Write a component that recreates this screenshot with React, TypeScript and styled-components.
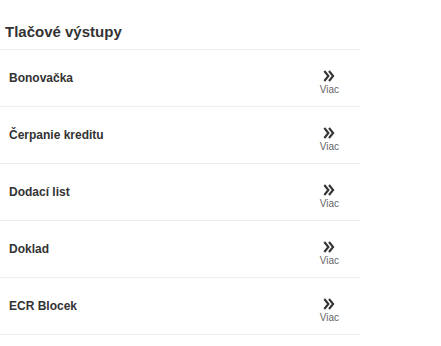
import React from 'react';
import styled, { createGlobalStyle } from 'styled-components';

const GlobalStyle = createGlobalStyle`
    html, body {
        margin: 0;
        padding: 0;
        background: #fff;
        font-family: "Liberation Sans", Arial, sans-serif;
        color: #333;
    }
`;

const Panel = styled.div`
    width: 360px;
`;

const Title = styled.h2`
    margin: 0;
    height: 50px;
    padding: 14px 0 0 5px;
    display: flex;
    align-items: center;
    box-sizing: border-box;
    font-size: 15px;
    font-weight: bold;
    color: #333;
    border-bottom: 1px solid #eee;
`;

const Row = styled.div`
    height: 57px;
    box-sizing: border-box;
    display: flex;
    align-items: center;
    justify-content: space-between;
    padding: 0 21px 0 9px;
    border-bottom: 1px solid #eee;
`;

const Name = styled.span`
    font-size: 12px;
    font-weight: bold;
    color: #333;
`;

const More = styled.a`
    display: flex;
    flex-direction: column;
    align-items: center;
    padding-top: 8px;
    color: #666;
    text-decoration: none;
    font-size: 10px;
    line-height: 11px;

    svg {
        margin-bottom: 2px;
    }
`;

const Chevrons = () => (
    <svg width="12" height="12" viewBox="0 0 12 12">
        <path
            d="M1.3 1 L5.4 6 L1.3 11 M6 1 L10.1 6 L6 11"
            fill="none"
            stroke="#333"
            strokeWidth="2.1"
            strokeLinejoin="miter"
        />
    </svg>
);

const items = ['Bonovačka', 'Čerpanie kreditu', 'Dodací list', 'Doklad', 'ECR Blocek'];

export default function App() {
    return (
        <>
            <GlobalStyle />
            <Panel>
                <Title>Tlačové výstupy</Title>
                {items.map(name => (
                    <Row key={name}>
                        <Name>{name}</Name>
                        <More href="#">
                            <Chevrons />
                            Viac
                        </More>
                    </Row>
                ))}
            </Panel>
        </>
    );
}
